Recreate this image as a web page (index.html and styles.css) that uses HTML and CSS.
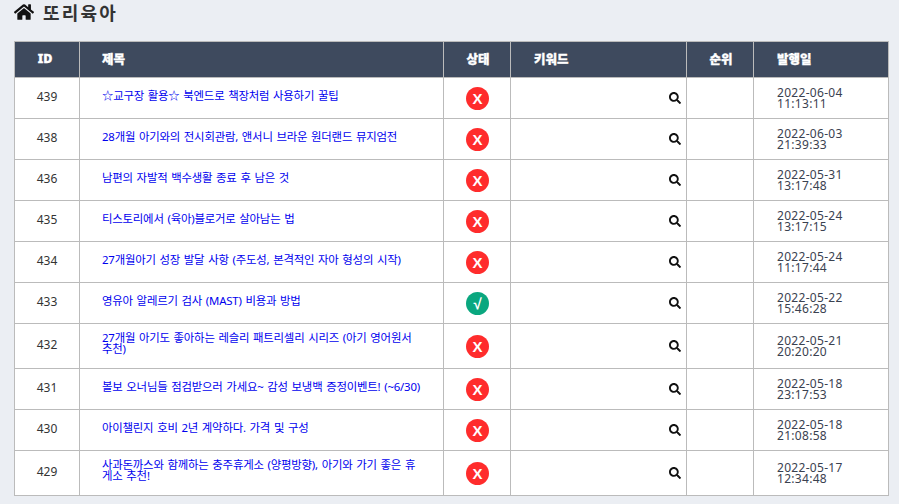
FILE: index.html
```html
<!DOCTYPE html>
<html lang="ko">
<head>
<meta charset="utf-8">
<title>또리육아</title>
<link rel="stylesheet" href="styles.css">
</head>
<body>
<h1 class="site-title">
<svg class="home-icon" viewBox="0 0 576 512" aria-hidden="true"><path d="M280.4 148.3 96 300.1V464a16 16 0 0 0 16 16l112-.3a16 16 0 0 0 15.9-16V368a16 16 0 0 1 16-16h64a16 16 0 0 1 16 16v95.6a16 16 0 0 0 16 16.1l112 .3a16 16 0 0 0 16-16V300L295.700 148.300a12.200 12.200 0 0 0-15.300 0zM571.600 251.500 488 182.600V44.100a12 12 0 0 0-12-12h-56a12 12 0 0 0-12 12v72.600L318.500 43a48 48 0 0 0-61 0L4.300 251.500a12 12 0 0 0-1.600 16.900l25.500 31A12 12 0 0 0 45.200 301l235.200-193.700a12.200 12.200 0 0 1 15.300 0L530.900 301a12 12 0 0 0 16.900-1.600l25.500-31a12 12 0 0 0-1.700-16.900z"/></svg>
<span>또리육아</span>
</h1>
<table class="posts">
<colgroup><col class="c-id"><col class="c-title"><col class="c-status"><col class="c-kw"><col class="c-rank"><col class="c-date"></colgroup>
<thead>
<tr><th class="th-id"><span class="th-text">ID</span></th><th class="left th-title"><span class="th-text">제목</span></th><th class="th-status"><span class="th-text">상태</span></th><th class="left"><span class="th-text">키워드</span></th><th class="th-rank"><span class="th-text">순위</span></th><th class="left"><span class="th-text">발행일</span></th></tr>
</thead>
<tbody>
<tr><td class="id">439</td><td class="title"><a href="#">☆교구장 활용☆ 북엔드로 책장처럼 사용하기 꿀팁</a></td><td class="st"><span class="badge no">X</span></td><td class="kw"><svg class="search" viewBox="0 0 512 512"><path d="M505 442.700 405.300 343a24 24 0 0 0-17-7H372c27.600-35.300 44-79.700 44-128C416 93.100 322.900 0 208 0S0 93.100 0 208s93.100 208 208 208c48.300 0 92.700-16.400 128-44v16.300c0 6.400 2.500 12.500 7 17l99.700 99.700a23.900 23.900 0 0 0 33.900 0l28.300-28.300a24.100 24.100 0 0 0 .1-34zM208 336c-70.700 0-128-57.200-128-128 0-70.700 57.200-128 128-128 70.700 0 128 57.200 128 128 0 70.700-57.200 128-128 128z"/></svg></td><td></td><td class="date">2022-06-04<br>11:13:11</td></tr>
<tr><td class="id">438</td><td class="title"><a href="#">28개월 아기와의 전시회관람, 앤서니 브라운 원더랜드 뮤지엄전</a></td><td class="st"><span class="badge no">X</span></td><td class="kw"><svg class="search" viewBox="0 0 512 512"><path d="M505 442.700 405.300 343a24 24 0 0 0-17-7H372c27.600-35.300 44-79.700 44-128C416 93.100 322.900 0 208 0S0 93.100 0 208s93.100 208 208 208c48.300 0 92.700-16.400 128-44v16.300c0 6.400 2.500 12.500 7 17l99.700 99.700a23.900 23.900 0 0 0 33.900 0l28.300-28.300a24.100 24.100 0 0 0 .1-34zM208 336c-70.700 0-128-57.200-128-128 0-70.700 57.200-128 128-128 70.700 0 128 57.200 128 128 0 70.700-57.200 128-128 128z"/></svg></td><td></td><td class="date">2022-06-03<br>21:39:33</td></tr>
<tr><td class="id">436</td><td class="title"><a href="#">남편의 자발적 백수생활 종료 후 남은 것</a></td><td class="st"><span class="badge no">X</span></td><td class="kw"><svg class="search" viewBox="0 0 512 512"><path d="M505 442.700 405.300 343a24 24 0 0 0-17-7H372c27.600-35.300 44-79.700 44-128C416 93.100 322.900 0 208 0S0 93.100 0 208s93.100 208 208 208c48.300 0 92.700-16.400 128-44v16.300c0 6.400 2.500 12.500 7 17l99.700 99.700a23.900 23.900 0 0 0 33.900 0l28.300-28.300a24.100 24.100 0 0 0 .1-34zM208 336c-70.700 0-128-57.200-128-128 0-70.700 57.200-128 128-128 70.700 0 128 57.200 128 128 0 70.700-57.200 128-128 128z"/></svg></td><td></td><td class="date">2022-05-31<br>13:17:48</td></tr>
<tr><td class="id">435</td><td class="title"><a href="#">티스토리에서 (육아)블로거로 살아남는 법</a></td><td class="st"><span class="badge no">X</span></td><td class="kw"><svg class="search" viewBox="0 0 512 512"><path d="M505 442.700 405.300 343a24 24 0 0 0-17-7H372c27.600-35.300 44-79.700 44-128C416 93.100 322.900 0 208 0S0 93.100 0 208s93.100 208 208 208c48.300 0 92.700-16.400 128-44v16.300c0 6.400 2.500 12.500 7 17l99.700 99.700a23.900 23.900 0 0 0 33.900 0l28.300-28.300a24.100 24.100 0 0 0 .1-34zM208 336c-70.700 0-128-57.200-128-128 0-70.700 57.200-128 128-128 70.700 0 128 57.200 128 128 0 70.700-57.200 128-128 128z"/></svg></td><td></td><td class="date">2022-05-24<br>13:17:15</td></tr>
<tr><td class="id">434</td><td class="title"><a href="#">27개월아기 성장 발달 사항 (주도성, 본격적인 자아 형성의 시작)</a></td><td class="st"><span class="badge no">X</span></td><td class="kw"><svg class="search" viewBox="0 0 512 512"><path d="M505 442.700 405.300 343a24 24 0 0 0-17-7H372c27.600-35.300 44-79.700 44-128C416 93.100 322.900 0 208 0S0 93.100 0 208s93.100 208 208 208c48.300 0 92.700-16.400 128-44v16.300c0 6.400 2.500 12.500 7 17l99.700 99.700a23.900 23.900 0 0 0 33.900 0l28.300-28.300a24.100 24.100 0 0 0 .1-34zM208 336c-70.700 0-128-57.200-128-128 0-70.700 57.200-128 128-128 70.700 0 128 57.200 128 128 0 70.700-57.200 128-128 128z"/></svg></td><td></td><td class="date">2022-05-24<br>11:17:44</td></tr>
<tr><td class="id">433</td><td class="title"><a href="#">영유아 알레르기 검사 (MAST) 비용과 방법</a></td><td class="st"><span class="badge ok">√</span></td><td class="kw"><svg class="search" viewBox="0 0 512 512"><path d="M505 442.700 405.300 343a24 24 0 0 0-17-7H372c27.600-35.300 44-79.700 44-128C416 93.100 322.900 0 208 0S0 93.100 0 208s93.100 208 208 208c48.300 0 92.700-16.400 128-44v16.300c0 6.400 2.500 12.500 7 17l99.700 99.700a23.900 23.900 0 0 0 33.900 0l28.300-28.300a24.100 24.100 0 0 0 .1-34zM208 336c-70.700 0-128-57.200-128-128 0-70.700 57.200-128 128-128 70.700 0 128 57.200 128 128 0 70.700-57.200 128-128 128z"/></svg></td><td></td><td class="date">2022-05-22<br>15:46:28</td></tr>
<tr><td class="id">432</td><td class="title"><a href="#">27개월 아기도 좋아하는 레슬리 패트리셀리 시리즈 (아기 영어원서 추천)</a></td><td class="st"><span class="badge no">X</span></td><td class="kw"><svg class="search" viewBox="0 0 512 512"><path d="M505 442.700 405.300 343a24 24 0 0 0-17-7H372c27.600-35.300 44-79.700 44-128C416 93.100 322.900 0 208 0S0 93.100 0 208s93.100 208 208 208c48.300 0 92.700-16.400 128-44v16.300c0 6.400 2.500 12.500 7 17l99.700 99.700a23.900 23.900 0 0 0 33.900 0l28.300-28.300a24.100 24.100 0 0 0 .1-34zM208 336c-70.700 0-128-57.200-128-128 0-70.700 57.200-128 128-128 70.700 0 128 57.200 128 128 0 70.700-57.200 128-128 128z"/></svg></td><td></td><td class="date">2022-05-21<br>20:20:20</td></tr>
<tr><td class="id">431</td><td class="title"><a href="#">볼보 오너님들 점검받으러 가세요~ 감성 보냉백 증정이벤트! (~6/30)</a></td><td class="st"><span class="badge no">X</span></td><td class="kw"><svg class="search" viewBox="0 0 512 512"><path d="M505 442.700 405.300 343a24 24 0 0 0-17-7H372c27.600-35.300 44-79.700 44-128C416 93.100 322.900 0 208 0S0 93.100 0 208s93.100 208 208 208c48.300 0 92.700-16.400 128-44v16.300c0 6.400 2.500 12.500 7 17l99.700 99.700a23.900 23.900 0 0 0 33.900 0l28.300-28.300a24.100 24.100 0 0 0 .1-34zM208 336c-70.700 0-128-57.200-128-128 0-70.700 57.200-128 128-128 70.700 0 128 57.200 128 128 0 70.700-57.200 128-128 128z"/></svg></td><td></td><td class="date">2022-05-18<br>23:17:53</td></tr>
<tr><td class="id">430</td><td class="title"><a href="#">아이챌린지 호비 2년 계약하다. 가격 및 구성</a></td><td class="st"><span class="badge no">X</span></td><td class="kw"><svg class="search" viewBox="0 0 512 512"><path d="M505 442.700 405.300 343a24 24 0 0 0-17-7H372c27.600-35.300 44-79.700 44-128C416 93.100 322.900 0 208 0S0 93.100 0 208s93.100 208 208 208c48.300 0 92.700-16.400 128-44v16.300c0 6.400 2.500 12.500 7 17l99.700 99.700a23.900 23.900 0 0 0 33.900 0l28.300-28.300a24.100 24.100 0 0 0 .1-34zM208 336c-70.700 0-128-57.200-128-128 0-70.700 57.200-128 128-128 70.700 0 128 57.200 128 128 0 70.700-57.200 128-128 128z"/></svg></td><td></td><td class="date">2022-05-18<br>21:08:58</td></tr>
<tr><td class="id">429</td><td class="title"><a href="#">사과돈까스와 함께하는 충주휴게소 (양평방향), 아기와 가기 좋은 휴게소 추천!</a></td><td class="st"><span class="badge no">X</span></td><td class="kw"><svg class="search" viewBox="0 0 512 512"><path d="M505 442.700 405.300 343a24 24 0 0 0-17-7H372c27.600-35.300 44-79.700 44-128C416 93.100 322.900 0 208 0S0 93.100 0 208s93.100 208 208 208c48.300 0 92.700-16.400 128-44v16.300c0 6.400 2.500 12.500 7 17l99.700 99.700a23.900 23.900 0 0 0 33.900 0l28.300-28.300a24.100 24.100 0 0 0 .1-34zM208 336c-70.700 0-128-57.200-128-128 0-70.700 57.200-128 128-128 70.700 0 128 57.200 128 128 0 70.700-57.200 128-128 128z"/></svg></td><td></td><td class="date">2022-05-17<br>12:34:48</td></tr>
</tbody>
</table>
</body>
</html>
```
FILE: styles.css
```css
html, body { margin: 0; padding: 0; }
body {
  background: #ebeef3;
  color: #333;
  font-family: "Noto Sans", "Noto Sans CJK KR", sans-serif;
  overflow: hidden;
  height: 504px;
}
.site-title {
  display: flex;
  align-items: center;
  gap: 9px;
  margin: 0;
  padding: 0 0 17px 14px;
  height: 41px;
  box-sizing: border-box;
  font-size: 18px;
  font-weight: 700;
  color: #333;
  letter-spacing: 2.200px;
}
.home-icon { width: 20px; height: 18px; fill: #111; }
.posts {
  border-collapse: collapse;
  table-layout: fixed;
  width: 875px;
  margin-left: 14px;
  background: #fff;
  font-size: 12px;
}
.c-id { width: 65px; }
.c-title { width: 364px; }
.c-status { width: 67px; }
.c-kw { width: 176px; }
.c-rank { width: 67px; }
.c-date { width: 135px; }
.posts th, .posts td { border: 1px solid #bbb; box-sizing: border-box; }
.posts th {
  height: 36px;
  padding: 0 0 3px;
  background: #3e4a5e;
  color: #fff;
  font-size: 12.500px;
  font-weight: 900;
  text-align: center;
}
.th-text { -webkit-text-stroke: 0.3px #fff; }
.posts .th-id { padding-right: 4px; }
.posts .th-status, .posts .th-rank { padding-left: 2px; }
.posts th.left { text-align: left; padding-left: 23px; }
.posts th.th-title { padding-left: 22px; }
.posts td { height: 41px; padding: 0; line-height: 11px; vertical-align: middle; }
.posts .id { text-align: center; color: #333; padding-bottom: 3px; }
.posts .title { padding: 8px 20px 14px 22px; font-size: 11.400px; letter-spacing: -0.2px; word-spacing: 1px; }
.title a { color: #0000ee; text-decoration: none; }
.posts .st { text-align: center; padding-left: 1px; }
.badge {
  display: inline-block;
  width: 23px;
  height: 23px;
  line-height: 23px;
  border-radius: 50%;
  color: #fff;
  font-family: "Liberation Sans", sans-serif;
  font-weight: 700;
  font-size: 15px;
  vertical-align: middle;
}
.no { background: #ff2c2c; }
.ok { background: #0aa77f; }
.posts .kw { text-align: right; padding-right: 5px; }
.search { width: 12px; height: 12px; vertical-align: middle; fill: #111; }
.posts .date { padding: 0 0 1px 23px; font-size: 12px; letter-spacing: 0.300px; color: #3a4150; }
```
